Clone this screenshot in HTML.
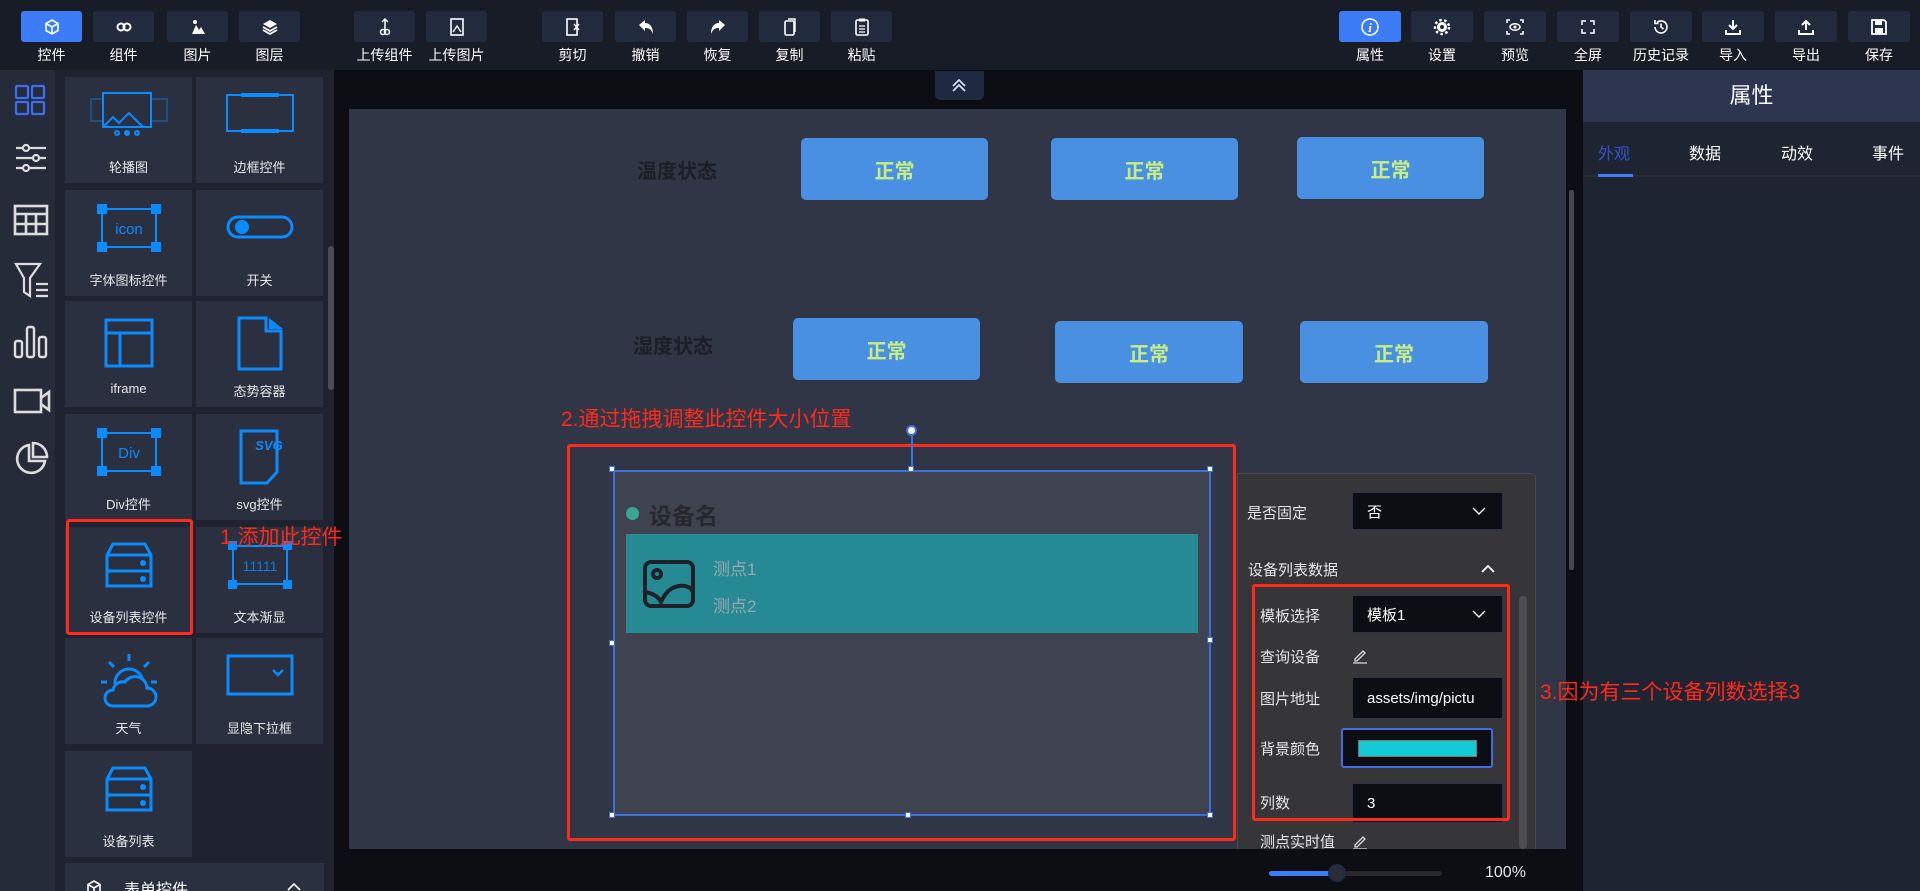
<!DOCTYPE html>
<html><head><meta charset="utf-8"><style>
*{margin:0;padding:0;box-sizing:border-box}
html{width:1920px;height:891px;overflow:hidden}
body{width:1920px;height:891px;overflow:hidden;background:#0c0e14;font-family:"Liberation Sans","Noto Sans CJK SC",sans-serif;position:relative;color:#fff}
.a{position:absolute}
.tb{position:absolute;top:0;left:0;width:1920px;height:70px;background:#181c27}
.btn{position:absolute;top:11px;height:31px;background:#222a3d;border-radius:3px;display:flex;align-items:center;justify-content:center}
.btn.on{background:#3d7cf7}
.lbl{position:absolute;top:45px;font-size:14px;color:#fff;text-align:center;white-space:nowrap}
.tile{position:absolute;width:127px;height:106px;background:#2a3040}
.tile .t{position:absolute;left:0;right:0;top:80px;text-align:center;font-size:13px;color:#e8e8e8}
.tile svg{position:absolute;left:50%;top:14px;transform:translateX(-50%)}
.nb{position:absolute;height:62px;background:#4a90e2;border-radius:5px;color:#c7ee82;font-weight:bold;font-size:20px;display:flex;align-items:center;justify-content:center}
.lab{position:absolute;font-weight:bold;font-size:20px;color:#1c1f25}
.red{color:#ff2a1a;font-size:21px;position:absolute;white-space:nowrap;z-index:5}
.pl{position:absolute;left:1260px;font-size:15px;color:#e6e6e6}
.in{position:absolute;left:1352px;width:151px;background:#0c0e14;border:1px solid #2c3447;border-radius:2px;font-size:15px;color:#fff;padding-left:14px;display:flex;align-items:center}
.h{position:absolute;width:6px;height:6px;background:#fff;border:1px solid #3d6fe0}
</style></head><body>
<div class="tb"></div>
<div class="btn on" style="left:21px;width:61px"><svg width="18" height="18" viewBox="0 0 18 18"><path d="M9 2L15 5.5V12.5L9 16L3 12.5V5.5Z M3 5.5L9 9L15 5.5 M9 9V16" fill="none" stroke="#fff" stroke-width="1.6"/></svg></div>
<div class="lbl" style="left:21px;width:61px">控件</div>
<div class="btn" style="left:93px;width:61px"><svg width="18" height="12" viewBox="0 0 18 12"><circle cx="6" cy="6" r="3.5" fill="none" stroke="#fff" stroke-width="2"/><circle cx="12" cy="6" r="3.5" fill="none" stroke="#fff" stroke-width="2"/></svg></div>
<div class="lbl" style="left:93px;width:61px">组件</div>
<div class="btn" style="left:167px;width:61px"><svg width="18" height="18" viewBox="0 0 18 18"><circle cx="6" cy="4" r="2" fill="#fff"/><path d="M3 16L7 7L10 12L12 9L16 16Z" fill="#fff"/></svg></div>
<div class="lbl" style="left:167px;width:61px">图片</div>
<div class="btn" style="left:239px;width:61px"><svg width="18" height="18" viewBox="0 0 18 18"><path d="M9 2L16 6L9 10L2 6Z" fill="#fff"/><path d="M2 9L9 13L16 9M2 12L9 16L16 12" fill="none" stroke="#fff" stroke-width="1.8"/></svg></div>
<div class="lbl" style="left:239px;width:61px">图层</div>
<div class="btn" style="left:354px;width:61px"><svg width="14" height="20" viewBox="0 0 14 20"><path d="M7 2V13M4 5L7 2L10 5" stroke="#fff" fill="none" stroke-width="1.5"/><circle cx="5" cy="15" r="2.5" fill="none" stroke="#fff" stroke-width="1.5"/><circle cx="9" cy="15" r="2.5" fill="none" stroke="#fff" stroke-width="1.5"/></svg></div>
<div class="lbl" style="left:350px;width:69px">上传组件</div>
<div class="btn" style="left:426px;width:61px"><svg width="16" height="20" viewBox="0 0 16 20"><rect x="2" y="2" width="12" height="16" fill="none" stroke="#fff" stroke-width="1.6"/><path d="M4 15L8 9L12 15" fill="none" stroke="#fff" stroke-width="1.4"/></svg></div>
<div class="lbl" style="left:422px;width:69px">上传图片</div>
<div class="btn" style="left:542px;width:61px"><svg width="16" height="20" viewBox="0 0 16 20"><rect x="2" y="2" width="10" height="16" fill="none" stroke="#fff" stroke-width="1.6"/><path d="M9 7L14 13M14 7L9 13" stroke="#fff" stroke-width="1.4"/></svg></div>
<div class="lbl" style="left:542px;width:61px">剪切</div>
<div class="btn" style="left:615px;width:61px"><svg width="18" height="18" viewBox="0 0 18 18"><path d="M2 7L8 2V5C13 5 16 9 16 16C14 11 12 10 8 10V13Z" fill="#fff"/></svg></div>
<div class="lbl" style="left:615px;width:61px">撤销</div>
<div class="btn" style="left:687px;width:61px"><svg width="18" height="18" viewBox="0 0 18 18"><path d="M16 7L10 2V5C5 5 2 9 2 16C4 11 6 10 10 10V13Z" fill="#fff"/></svg></div>
<div class="lbl" style="left:687px;width:61px">恢复</div>
<div class="btn" style="left:759px;width:61px"><svg width="16" height="20" viewBox="0 0 16 20"><rect x="3" y="4" width="9" height="14" rx="1.5" fill="none" stroke="#fff" stroke-width="1.6"/><path d="M6 2H13V15" fill="none" stroke="#fff" stroke-width="1.4"/></svg></div>
<div class="lbl" style="left:759px;width:61px">复制</div>
<div class="btn" style="left:831px;width:61px"><svg width="16" height="20" viewBox="0 0 16 20"><rect x="2" y="3" width="12" height="15" rx="1.5" fill="none" stroke="#fff" stroke-width="1.6"/><rect x="5" y="1.5" width="6" height="3" fill="#fff"/><path d="M5 9H11M5 12H11M5 15H11" stroke="#fff" stroke-width="1.3"/></svg></div>
<div class="lbl" style="left:831px;width:61px">粘贴</div>

<div class="btn on" style="left:1339px;width:62px"><svg width="20" height="20" viewBox="0 0 20 20"><circle cx="10" cy="10" r="8" fill="none" stroke="#fff" stroke-width="1.6"/><text x="10" y="15" font-size="13" font-style="italic" font-weight="bold" fill="#fff" text-anchor="middle" font-family="Liberation Serif">i</text></svg></div>
<div class="lbl" style="left:1339px;width:62px">属性</div>
<div class="btn" style="left:1411px;width:62px"><svg width="18" height="18" viewBox="0 0 18 18"><circle cx="9" cy="9" r="5" fill="#fff"/><circle cx="9" cy="9" r="7" fill="none" stroke="#fff" stroke-width="2.5" stroke-dasharray="2.5 2.5"/><circle cx="9" cy="9" r="2" fill="#222a3d"/></svg></div>
<div class="lbl" style="left:1411px;width:62px">设置</div>
<div class="btn" style="left:1484px;width:62px"><svg width="20" height="18" viewBox="0 0 20 18"><path d="M2 5V2H5M15 2H18V5M18 13V16H15M5 16H2V13" fill="none" stroke="#fff" stroke-width="1.5"/><ellipse cx="10" cy="9" rx="5" ry="3.2" fill="none" stroke="#fff" stroke-width="1.5"/><circle cx="10" cy="9" r="1.5" fill="#fff"/></svg></div>
<div class="lbl" style="left:1484px;width:62px">预览</div>
<div class="btn" style="left:1557px;width:62px"><svg width="16" height="16" viewBox="0 0 16 16"><path d="M2 6V2H6M10 2H14V6M14 10V14H10M6 14H2V10" fill="none" stroke="#fff" stroke-width="1.5"/></svg></div>
<div class="lbl" style="left:1557px;width:62px">全屏</div>
<div class="btn" style="left:1630px;width:62px"><svg width="18" height="18" viewBox="0 0 18 18"><path d="M3 9A6 6 0 1 0 5 4.5M3 2V5.5H6.5M9 5.5V9L11.5 11" fill="none" stroke="#fff" stroke-width="1.6"/></svg></div>
<div class="lbl" style="left:1622px;width:78px">历史记录</div>
<div class="btn" style="left:1702px;width:62px"><svg width="18" height="18" viewBox="0 0 18 18"><path d="M9 2V11M5 7L9 11L13 7M2 12V16H16V12" fill="none" stroke="#fff" stroke-width="2"/></svg></div>
<div class="lbl" style="left:1702px;width:62px">导入</div>
<div class="btn" style="left:1775px;width:62px"><svg width="18" height="18" viewBox="0 0 18 18"><path d="M9 12V3M5 7L9 3L13 7M2 12V16H16V12" fill="none" stroke="#fff" stroke-width="2"/></svg></div>
<div class="lbl" style="left:1775px;width:62px">导出</div>
<div class="btn" style="left:1848px;width:62px"><svg width="18" height="18" viewBox="0 0 18 18"><path d="M2 2H14L16 4V16H2Z" fill="none" stroke="#fff" stroke-width="1.8"/><rect x="5" y="2" width="7" height="5" fill="#fff"/><rect x="5" y="10" width="8" height="6" fill="#fff"/></svg></div>
<div class="lbl" style="left:1848px;width:62px">保存</div>

<div class="a" style="left:0;top:70px;width:55px;height:821px;background:#262b3a"></div>
<svg class="a" style="left:13px;top:83px" width="34" height="34" viewBox="0 0 34 34" fill="none" stroke="#3b6ef5" stroke-width="2.2"><rect x="3" y="3" width="12" height="12" rx="1"/><rect x="19" y="3" width="12" height="12" rx="1"/><rect x="3" y="19" width="12" height="12" rx="1"/><rect x="19" y="19" width="12" height="12" rx="1"/></svg>
<svg class="a" style="left:14px;top:141px" width="34" height="34" viewBox="0 0 34 34" fill="none" stroke="#ddd" stroke-width="2.2"><path d="M2 7H32M2 17H32M2 27H32"/><circle cx="12" cy="7" r="3" fill="#262b3a"/><circle cx="22" cy="17" r="3" fill="#262b3a"/><circle cx="12" cy="27" r="3" fill="#262b3a"/></svg>
<svg class="a" style="left:13px;top:204px" width="36" height="32" viewBox="0 0 36 32" fill="none" stroke="#ddd" stroke-width="2.6"><rect x="2" y="2" width="32" height="28"/><path d="M2 10H34M2 20H34M13 10V30M23 10V30"/></svg>
<svg class="a" style="left:14px;top:262px" width="36" height="36" viewBox="0 0 36 36" fill="none" stroke="#ddd" stroke-width="2.2"><path d="M2 2H26L16 16V34L10 30V16Z"/><path d="M22 22H34M22 28H34M22 34H34"/></svg>
<svg class="a" style="left:13px;top:325px" width="36" height="34" viewBox="0 0 36 34" fill="none" stroke="#ddd" stroke-width="2.4"><rect x="2" y="16" width="7" height="16" rx="2"/><rect x="14" y="2" width="7" height="30" rx="2"/><rect x="26" y="12" width="7" height="20" rx="2"/></svg>
<svg class="a" style="left:13px;top:388px" width="38" height="26" viewBox="0 0 38 26" fill="none" stroke="#ddd" stroke-width="2.6"><rect x="2" y="2" width="26" height="22"/><path d="M28 10L36 4V22L28 16"/></svg>
<svg class="a" style="left:13px;top:441px" width="36" height="36" viewBox="0 0 36 36" fill="none" stroke="#ddd" stroke-width="2.6"><path d="M16 4A14 14 0 1 0 32 20H16Z"/><path d="M20 2A14 14 0 0 1 34 16H20Z"/></svg>

<div class="a" style="left:55px;top:70px;width:279px;height:821px;background:#1f2330;overflow:hidden">
<div class="a" style="left:273px;top:176px;width:6px;height:144px;background:#4a4d55;border-radius:3px"></div>
<div class="a" style="left:10px;top:793px;width:259px;height:40px;background:#2a3040"></div>
<svg class="a" style="left:30px;top:809px" width="18" height="18" viewBox="0 0 18 18"><path d="M9 2L15 5.5V12.5L9 16L3 12.5V5.5Z M3 5.5L9 9L15 5.5 M9 9V16" fill="none" stroke="#fff" stroke-width="1.6"/></svg>
<div class="a" style="left:69px;top:806px;font-size:16px;color:#fff">表单控件</div>
<svg class="a" style="left:232px;top:813px" width="14" height="8"><path d="M1 7L7 1L13 7" fill="none" stroke="#fff" stroke-width="1.6"/></svg>
</div>

<div class="tile" style="left:65px;top:77px"><svg width="80" height="48" viewBox="0 0 80 48" fill="none" stroke="#0a8cff" stroke-width="2"><rect x="2" y="8" width="76" height="22" stroke-opacity=".35"/><rect x="14" y="2" width="48" height="34" fill="#2a3040"/><path d="M14 36L24 26L30 32L40 22L54 36"/><circle cx="28" cy="42" r="2"/><circle cx="38" cy="42" r="2" fill="#0a8cff"/><circle cx="48" cy="42" r="2"/></svg><div class="t">轮播图</div></div>
<div class="tile" style="left:196px;top:77px"><svg width="70" height="44" viewBox="0 0 70 44" fill="none" stroke="#0a8cff" stroke-width="2"><rect x="2" y="4" width="66" height="36"/><path d="M16 4H54M16 40H54" stroke-width="4"/></svg><div class="t">边框控件</div></div>
<div class="tile" style="left:65px;top:190px"><svg width="64" height="48" viewBox="0 0 64 48" fill="none" stroke="#0a8cff" stroke-width="2"><rect x="5" y="5" width="54" height="38"/><rect x="1" y="1" width="8" height="8" fill="#0a8cff"/><rect x="55" y="1" width="8" height="8" fill="#0a8cff"/><rect x="1" y="39" width="8" height="8" fill="#0a8cff"/><rect x="55" y="39" width="8" height="8" fill="#0a8cff"/><text x="32" y="30" font-size="15" fill="#0a8cff" stroke="none" text-anchor="middle" font-family="Liberation Sans">icon</text></svg><div class="t">字体图标控件</div></div>
<div class="tile" style="left:196px;top:190px"><svg width="70" height="48" viewBox="0 0 70 48" fill="none" stroke="#0a8cff" stroke-width="3"><rect x="3" y="13" width="64" height="20" rx="10"/><circle cx="17" cy="23" r="7" fill="#0a8cff" stroke="none"/></svg><div class="t">开关</div></div>
<div class="tile" style="left:65px;top:301px"><svg width="52" height="54" viewBox="0 0 52 54" fill="none" stroke="#0a8cff" stroke-width="3"><rect x="3" y="5" width="46" height="46"/><path d="M3 18H49M17 18V51"/></svg><div class="t">iframe</div></div>
<div class="tile" style="left:196px;top:301px"><svg width="54" height="58" viewBox="0 0 54 58" fill="none" stroke="#0a8cff" stroke-width="3"><path d="M6 3H33V16H48V54H6Z"/><path d="M36 3L50 14H36Z" fill="#0a8cff" stroke="none"/></svg><div class="t">态势容器</div></div>
<div class="tile" style="left:65px;top:414px"><svg width="64" height="48" viewBox="0 0 64 48" fill="none" stroke="#0a8cff" stroke-width="2"><rect x="5" y="5" width="54" height="38"/><rect x="1" y="1" width="8" height="8" fill="#0a8cff"/><rect x="55" y="1" width="8" height="8" fill="#0a8cff"/><rect x="1" y="39" width="8" height="8" fill="#0a8cff"/><rect x="55" y="39" width="8" height="8" fill="#0a8cff"/><text x="32" y="30" font-size="15" fill="#0a8cff" stroke="none" text-anchor="middle" font-family="Liberation Sans">Div</text></svg><div class="t">Div控件</div></div>
<div class="tile" style="left:196px;top:414px"><svg width="54" height="58" viewBox="0 0 54 58" fill="none" stroke="#0a8cff" stroke-width="3"><path d="M8 3H44V44L34 55H8Z"/><text x="36" y="22" font-size="13" font-style="italic" font-weight="bold" fill="#0a8cff" stroke="none" text-anchor="middle" font-family="Liberation Sans">SVG</text></svg><div class="t">svg控件</div></div>
<div class="tile" style="left:65px;top:527px"><svg width="52" height="48" viewBox="0 0 52 48" fill="none" stroke="#0a8cff" stroke-width="3"><path d="M10 3H42L48 14V45H4V14Z M4 14H48 M4 30H48"/><circle cx="40" cy="22" r="1.5" fill="#0a8cff"/><circle cx="40" cy="38" r="1.5" fill="#0a8cff"/></svg><div class="t">设备列表控件</div></div>
<div class="tile" style="left:196px;top:527px"><svg width="64" height="48" viewBox="0 0 64 48" fill="none" stroke="#0a8cff" stroke-width="2"><rect x="5" y="5" width="54" height="38"/><rect x="1" y="1" width="7" height="7" fill="#0a8cff"/><rect x="56" y="1" width="7" height="7" fill="#0a8cff"/><rect x="1" y="40" width="7" height="7" fill="#0a8cff"/><rect x="56" y="40" width="7" height="7" fill="#0a8cff"/><text x="32" y="30" font-size="14" fill="#0a8cff" stroke="none" text-anchor="middle" font-family="Liberation Sans" fill-opacity=".8">11111</text></svg><div class="t">文本渐显</div></div>
<div class="tile" style="left:65px;top:638px"><svg width="60" height="58" viewBox="0 0 60 58" fill="none" stroke="#0a8cff" stroke-width="3"><path d="M30 2V9M10 10L15 15M50 10L45 15M2 30H8M52 30H58"/><path d="M16 32A14 14 0 0 1 44 30"/><path d="M14 54H48A9 9 0 0 0 48 36A12 12 0 0 0 26 30A10 10 0 0 0 14 38A8 8 0 0 0 14 54Z" fill="#2a3040"/></svg><div class="t">天气</div></div>
<div class="tile" style="left:196px;top:638px"><svg width="70" height="44" viewBox="0 0 70 44" fill="none" stroke="#0a8cff" stroke-width="3"><rect x="3" y="4" width="64" height="38"/><path d="M48 18L53 23L58 18" stroke-width="2.5"/></svg><div class="t">显隐下拉框</div></div>
<div class="tile" style="left:65px;top:751px"><svg width="52" height="48" viewBox="0 0 52 48" fill="none" stroke="#0a8cff" stroke-width="3"><path d="M10 3H42L48 14V45H4V14Z M4 14H48 M4 30H48"/><circle cx="40" cy="22" r="1.5" fill="#0a8cff"/><circle cx="40" cy="38" r="1.5" fill="#0a8cff"/></svg><div class="t">设备列表</div></div>
<div class="a" style="left:66px;top:519px;width:127px;height:116px;border:3px solid #ff2a1a;border-radius:3px"></div>
<div class="red" style="left:220px;top:521px">1.添加此控件</div>

<div class="a" style="left:935px;top:71px;width:49px;height:29px;background:#1f2a42;border-radius:0 0 5px 5px"></div>
<svg class="a" style="left:950px;top:77px" width="18" height="16"><path d="M3 9L9 3L15 9M3 14L9 8L15 14" fill="none" stroke="#cfe3ff" stroke-width="1.7"/></svg>
<div class="a" style="left:349px;top:109px;width:1217px;height:740px;background:#313646"></div>
<div class="a" style="left:1569px;top:190px;width:5px;height:380px;background:#43464d;border-radius:2px"></div>
<div class="a" style="left:349px;top:850px;width:618px;height:11px;background:#2f323a;border-radius:5px"></div>

<div class="lab" style="left:637px;top:155px">温度状态</div>
<div class="lab" style="left:633px;top:330px">湿度状态</div>
<div class="nb" style="left:801px;top:138px;width:187px">正常</div>
<div class="nb" style="left:1051px;top:138px;width:187px">正常</div>
<div class="nb" style="left:1297px;top:137px;width:187px">正常</div>
<div class="nb" style="left:793px;top:318px;width:187px">正常</div>
<div class="nb" style="left:1055px;top:321px;width:188px">正常</div>
<div class="nb" style="left:1300px;top:321px;width:188px">正常</div>

<div class="red" style="left:561px;top:403px">2.通过拖拽调整此控件大小位置</div>
<div class="a" style="left:567px;top:444px;width:669px;height:397px;border:3px solid #ff2a1a;border-radius:3px"></div>
<div class="a" style="left:613px;top:470px;width:598px;height:346px;background:#3f4350;border:2px solid #3d6fe0"></div>
<div class="a" style="left:911px;top:430px;width:2px;height:40px;background:#3d6fe0"></div>
<div class="a" style="left:906px;top:425px;width:11px;height:11px;border-radius:50%;background:#fff;border:2px solid #3d6fe0"></div>
<div class="h" style="left:609px;top:466px"></div><div class="h" style="left:908px;top:466px"></div><div class="h" style="left:1207px;top:466px"></div>
<div class="h" style="left:609px;top:640px"></div><div class="h" style="left:1207px;top:637px"></div>
<div class="h" style="left:609px;top:812px"></div><div class="h" style="left:905px;top:812px"></div><div class="h" style="left:1207px;top:812px"></div>
<div class="a" style="left:626px;top:507px;width:13px;height:13px;border-radius:50%;background:#3aa595"></div>
<div class="a" style="left:649px;top:497px;font-size:23px;font-weight:bold;color:#26282e">设备名</div>
<div class="a" style="left:626px;top:534px;width:572px;height:99px;background:#268a94"></div>
<svg class="a" style="left:643px;top:560px" width="52" height="48" viewBox="0 0 52 48" fill="none" stroke="#1c2228" stroke-width="4"><rect x="2" y="2" width="48" height="44" rx="6"/><circle cx="14" cy="14" r="4"/><path d="M2 32Q14 34 18 42Q26 24 42 26Q48 27 50 32"/></svg>
<div class="a" style="left:713px;top:555px;font-size:17px;color:#9aa8ae">测点1</div>
<div class="a" style="left:713px;top:592px;font-size:17px;color:#9aa8ae">测点2</div>

<div class="a" style="left:1237px;top:473px;width:299px;height:376px;background:#363639;border:1px solid #4a4a4e;border-bottom:none;border-radius:0 5px 0 0"></div>
<div class="pl" style="left:1247px;top:502px">是否固定</div>
<div class="in" style="top:492px;height:38px">否<svg style="position:absolute;right:16px;top:14px" width="14" height="9"><path d="M1 1L7 7L13 1" fill="none" stroke="#fff" stroke-width="1.4"/></svg></div>
<div class="pl" style="left:1248px;top:559px">设备列表数据</div>
<svg class="a" style="left:1481px;top:565px" width="14" height="8"><path d="M1 7L7 1L13 7" fill="none" stroke="#fff" stroke-width="1.8"/></svg>
<div class="a" style="left:1519px;top:596px;width:8px;height:253px;background:#4d4e53;border-radius:4px"></div>
<div class="pl" style="top:605px">模板选择</div>
<div class="in" style="top:595px;height:38px">模板1<svg style="position:absolute;right:16px;top:14px" width="14" height="9"><path d="M1 1L7 7L13 1" fill="none" stroke="#fff" stroke-width="1.4"/></svg></div>
<div class="pl" style="top:646px">查询设备</div>
<svg class="a" style="left:1352px;top:648px" width="16" height="16"><path d="M3 11L11 3L13 5L5 13H3Z M1 15H15" fill="none" stroke="#ddd" stroke-width="1.3"/></svg>
<div class="pl" style="top:688px">图片地址</div>
<div class="in" style="top:677px;height:42px;overflow:hidden;white-space:nowrap">assets/img/pictu</div>
<div class="pl" style="top:738px">背景颜色</div>
<div class="a" style="left:1341px;top:728px;width:152px;height:40px;background:#0c0e14;border:2px solid #3d6fe0;border-radius:3px"></div>
<div class="a" style="left:1358px;top:740px;width:119px;height:17px;background:#13cad6;border:1px solid #777"></div>
<div class="pl" style="top:792px">列数</div>
<div class="in" style="top:783px;height:40px">3</div>
<div class="a" style="left:1252px;top:584px;width:258px;height:237px;border:3px solid #ff2a1a;border-radius:3px"></div>
<div class="pl" style="top:831px">测点实时值</div>
<svg class="a" style="left:1352px;top:834px" width="16" height="16"><path d="M3 11L11 3L13 5L5 13H3Z M1 15H15" fill="none" stroke="#ddd" stroke-width="1.3"/></svg>

<div class="a" style="left:334px;top:849px;width:1249px;height:42px;background:#0c0e14"></div>
<div class="a" style="left:1269px;top:871px;width:173px;height:5px;background:#26282e;border-radius:3px"></div>
<div class="a" style="left:1269px;top:871px;width:68px;height:5px;background:#3d7cf7;border-radius:3px"></div>
<div class="a" style="left:1328px;top:864px;width:18px;height:18px;border-radius:50%;background:#2a2d33;border:2px solid #1e2b45"></div>
<div class="a" style="left:1485px;top:864px;font-size:16px;color:#e6e6e6">100%</div>

<div class="a" style="left:1583px;top:70px;width:337px;height:821px;background:#1f2433"></div>
<div class="a" style="left:1583px;top:70px;width:337px;height:52px;background:#2d3550;text-align:center;line-height:52px;font-size:22px">属性</div>
<div class="a" style="left:1583px;top:175px;width:337px;height:2px;background:#2a2d33"></div>
<div class="a" style="left:1598px;top:174px;width:35px;height:3px;background:#3d7cf7"></div>
<div class="a" style="left:1598px;top:140px;font-size:16px;color:#2f55c8">外观</div>
<div class="a" style="left:1689px;top:140px;font-size:16px;color:#fff">数据</div>
<div class="a" style="left:1781px;top:140px;font-size:16px;color:#fff">动效</div>
<div class="a" style="left:1872px;top:140px;font-size:16px;color:#fff">事件</div>
<div class="red" style="left:1540px;top:676px">3.因为有三个设备列数选择3</div>
</body></html>
